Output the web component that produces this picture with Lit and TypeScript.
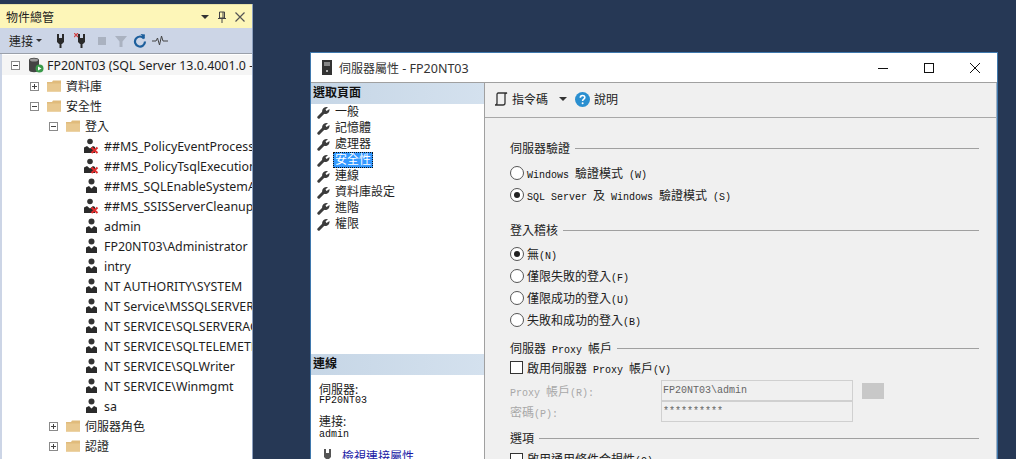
import { LitElement, html, css, svg } from "lit";
import { customElement } from "lit/decorators.js";

const folder = html`<svg class="ic" width="14" height="12" viewBox="0 0 14 12"><path d="M0 2h5l1-1.500h8V11.500H0z" fill="#e0bb7c"/><path d="M0 3.500h14v8H0z" fill="#e8c88f"/></svg>`;
const user = (bad: boolean) => html`<svg class="ic" width="16" height="16" viewBox="0 0 16 16">
  ${bad
    ? svg`<circle cx="6" cy="3.500" r="2.800" fill="#333"/>
      <path d="M0 15V9.500L3 8l3 2.500L9 8l2 1v6z" fill="#2b2b2b"/>
      <path d="M7.500 9.500l6 5.500M13.500 9.500l-6 5.500" stroke="#e02c2c" stroke-width="2" fill="none"/>`
    : svg`<circle cx="7.500" cy="3.500" r="3" fill="#333"/>
      <path d="M2 15V9.500L5 8l2.500 2.500L10 8l3 1.500V15z" fill="#2b2b2b"/>`}
</svg>`;
const expander = (open: boolean) => html`<svg class="ic" width="9" height="9" viewBox="0 0 9 9">
  <rect x=".5" y=".5" width="8" height="8" fill="#fff" stroke="#8a8a8a"/>
  <path d="M2 4.500h5${open ? "" : "M4.500 2v5"}" stroke="#444" fill="none"/></svg>`;
const plug = (x = false, c = "#2a2a2a") => html`<svg class="ic" width="16" height="16" viewBox="0 0 16 16">
  <path d="M5 1v4M10 1v4" stroke="${c}" stroke-width="2"/>
  <path d="M4 5h7v4l-2 2H6L4 9z" fill="${c}"/><path d="M7.500 11v4" stroke="${c}" stroke-width="2"/>
  ${x ? svg`<path d="M0 0l4 4M4 0L0 4" stroke="#d04040" stroke-width="1.200"/>` : ""}
</svg>`;
const wrench = html`<svg class="ic" width="13" height="13" viewBox="0 0 13 13">
  <path d="M1.800 11.200L6.500 6.500" stroke="#3c3c3c" stroke-width="3" stroke-linecap="round"/>
  <path d="M5 5.500C5 2.500 7.500.5 11 1L8.500 3.500 9.500 5l3-2C13 6.500 10 8.500 7.500 8z" fill="#3c3c3c"/></svg>`;

interface Row { t: string; lvl: number; kind: "folder" | "user"; open?: boolean; bad?: boolean }
const logins: [string, boolean][] = [
  ["##MS_PolicyEventProcessingLogin##", true], ["##MS_PolicyTsqlExecutionLogin##", true],
  ["##MS_SQLEnableSystemAssemblyLoadingUser##", false], ["##MS_SSISServerCleanupJobLogin##", true],
  ["admin", false], ["FP20NT03\\Administrator", false], ["intry", false], ["NT AUTHORITY\\SYSTEM", false],
  ["NT Service\\MSSQLSERVER", false], ["NT SERVICE\\SQLSERVERAGENT", false], ["NT SERVICE\\SQLTELEMETRY", false],
  ["NT SERVICE\\SQLWriter", false], ["NT SERVICE\\Winmgmt", false], ["sa", false],
];
const rows: Row[] = [
  { t: "資料庫", lvl: 1, kind: "folder", open: false },
  { t: "安全性", lvl: 1, kind: "folder", open: true },
  { t: "登入", lvl: 2, kind: "folder", open: true },
  ...logins.map(([t, bad]) => ({ t, bad, lvl: 3, kind: "user" as const })),
  { t: "伺服器角色", lvl: 2, kind: "folder", open: false },
  { t: "認證", lvl: 2, kind: "folder", open: false },
];
const pages = ["一般", "記憶體", "處理器", "安全性", "連線", "資料庫設定", "進階", "權限"];

@customElement("app-root")
export class AppRoot extends LitElement {
  static styles = css`
    :host { display: flex; align-items: flex-start; width: 1016px; height: 459px; overflow: hidden; background: #263855;
      font-family: "Noto Sans", "Noto Sans CJK TC", sans-serif; color: #1e1e1e; }
    .ic { flex: none; display: block; }
    .explorer { width: 253px; height: 455px; margin-top: 4px; flex: none; background: #ccd5e6; display: flex; flex-direction: column; border-right: 1px solid #8ea1c0; box-sizing: border-box; }
    .etitle { height: 24px; flex: none; background: #fdf6b8; display: flex; align-items: center; padding: 0 6px; font-size: 12px; border-top: 1px solid #e8e2a8; box-sizing: border-box; }
    .etitle span { flex: 1; }
    .ectl { display: flex; align-items: center; gap: 8px; color: #444; margin-right: 1px; }
    .etool { height: 26px; flex: none; display: flex; align-items: center; padding-left: 9px; font-size: 12px; border-bottom: 1px solid #9aa0aa; box-sizing: border-box; gap: 5px; color: #222; }
    .etool .connect { display: flex; align-items: center; gap: 3px; margin-right: 6px; }
    .caret { width: 0; height: 0; border: 3px solid transparent; border-top: 3px solid #333; border-bottom: 0; }
    .bigcaret { border-width: 4px 4px 0; }
    .tree { flex: 1; background: #fff; margin-left: 2px; min-height: 0; overflow: hidden; padding-top: 1px; }
    .row { height: 20px; display: flex; align-items: center; font-size: 12.400px; white-space: nowrap; overflow: hidden; }
    .row .exp { width: 9px; flex: none; margin-right: 8px; }
    .root { padding-left: 9px; background: #f5f5f5; margin-bottom: 1px; }
    .root .tx { margin-left: 3px; }
    .folder .tx { margin-left: 5px; font-size: 12px; }
    .user .tx { margin-left: 4px; }
    .l1 { padding-left: 28px; } .l2 { padding-left: 47px; } .l3 { padding-left: 82px; }

    .dialog { width: 688px; height: 407px; margin: 52px 0 0 57px; flex: none; background: #f0f0f0; border: 1px solid #3f78ad; border-bottom: 0; box-sizing: border-box; display: flex; flex-direction: column; }
    .dtitle { height: 29px; flex: none; background: #fff; border-bottom: 1px solid #a0a0a0; display: flex; align-items: center; padding-left: 11px; font-size: 12px; color: #333; }
    .dtitle .name { margin-left: 7px; flex: 1; }
    .lat { font-size: 12.500px; }
    .winbtns { display: flex; align-items: center; gap: 36px; padding-right: 17px; }
    .dbody { flex: 1; min-height: 0; display: flex; }
    .left { width: 173px; flex: none; background: #fff; border-right: 1px solid #a0a0a0; display: flex; flex-direction: column; }
    .lhead { height: 21px; flex: none; box-sizing: border-box; padding: 0 0 3px 2px; font-size: 12px; font-weight: 700; display: flex; align-items: center; background: linear-gradient(90deg, #c6d6e6, #d4e1ee); color: #111; }
    .pagelist { height: 250px; flex: none; box-sizing: border-box; padding-left: 6px; }
    .page { height: 16px; display: flex; align-items: center; font-size: 12px; gap: 3px; }
    .page .tx { padding: 0 1px; line-height: 14px; border: 1px dotted transparent; }
    .page.sel .tx { background: #3399ff; color: #fff; border-color: #111; }
    .conn { padding: 8px 0 0 8px; flex: 1; min-height: 0; overflow: hidden; }
    .conn .k { font-size: 12px; line-height: 13px; color: #222; }
    .conn .v { font-family: "Liberation Mono", monospace; font-size: 10px; line-height: 10px; margin-bottom: 9px; color: #111; }
    .conn .v2 { padding-top: 2px; margin-bottom: 7px; }
    .link { display: flex; align-items: center; gap: 6px; color: #1a1aa6; font-size: 12px; padding-left: 1px; margin-top: 4px; }
    .right { flex: 1; min-width: 0; display: flex; flex-direction: column; border-right: 1px solid #9fb0c4; }
    .rtool { height: 35px; flex: none; border-bottom: 1px solid #a8a8a8; display: flex; align-items: center; padding: 0 0 2px 9px; font-size: 12px; color: #222; box-sizing: border-box; }
    .rtool .scr { margin-left: 4px; margin-right: 11px; }
    .rtool .help { margin: 0 4px 0 8px; }
    .form { flex: 1; min-height: 0; overflow: hidden; padding: 22px 17px 0 25px; font-size: 12px; }
    .sec { display: flex; align-items: center; height: 16px; gap: 5px; font-size: 12px; color: #222; white-space: pre; }
    .sec::after { content: ""; flex: 1; height: 1px; background: #a0a0a0; }
    .mono { font-family: "Liberation Mono", "Noto Sans CJK TC", monospace; font-size: 10px; white-space: pre; color: #111; }
    .field .mono { color: inherit; }
    .opt { display: flex; align-items: center; height: 22px; gap: 3px; font-size: 12px; color: #222; white-space: pre; }
    .radio { width: 12px; height: 12px; border-radius: 50%; background: #fff; border: 1px solid #555; flex: none; display: flex; align-items: center; justify-content: center; }
    .radio i { width: 6px; height: 6px; border-radius: 50%; background: #222; }
    .check { width: 11px; height: 11px; background: #fff; border: 1px solid #333; flex: none; margin-right: 1px; }
    .g1 { margin-top: 6px; }
    .sec2 { margin-top: 16px; }
    .g2 { margin-top: 5px; }
    .sec3 { margin-top: 9px; }
    .opt-en { height: 21px; margin-top: 1px; }
    .opt-last { margin-top: 2px; }
    .sec-last { margin-top: 8px; }
    .fields { margin-top: 2px; }
    .field { display: flex; align-items: center; height: 21px; color: #a8a8a8; font-size: 12px; white-space: pre; }
    .field .lab { width: 151px; flex: none; }
    .input { width: 192px; height: 21px; box-sizing: border-box; background: #f0f0f0; border: 1px solid #d0d0d0; font-family: "Liberation Mono", monospace; font-size: 10px; color: #666; display: flex; align-items: center; padding-left: 1px; }
    .dots { width: 22px; height: 16px; background: #c8c8c8; margin-left: 9px; }
  `;

  render() {
    return html`
      <section class="explorer">
        <div class="etitle"><span>物件總管</span>
          <div class="ectl">
            <div class="caret bigcaret"></div>
            <svg class="ic" width="10" height="12" viewBox="0 0 10 12"><path d="M2.500 1h5v6h-5zM1 7.500h8M5 8v4M6 1v6" stroke="#444" fill="none"/></svg>
            <svg class="ic" width="10" height="10" viewBox="0 0 10 10"><path d="M.5.5l9 9M9.500.5l-9 9" stroke="#555" stroke-width="1.200"/></svg>
          </div>
        </div>
        <div class="etool">
          <div class="connect">連接<div class="caret"></div></div>
          ${plug()}${plug(true)}
          <svg class="ic" width="14" height="14" viewBox="0 0 14 14"><rect x="3" y="3" width="8" height="8" fill="#aab2c0"/></svg>
          <svg class="ic" width="14" height="14" viewBox="0 0 14 14"><path d="M1 2h12L8.500 7.500V13h-3V7.500z" fill="#aab2c0"/></svg>
          <svg class="ic" width="14" height="14" viewBox="0 0 14 14"><path d="M11 4.500A5 5 0 1 0 12 7.500" stroke="#1d5f9c" stroke-width="2.200" fill="none"/><path d="M7.500 0l4.500 .5L11.500 5z" fill="#1d5f9c"/></svg>
          <svg class="ic" width="16" height="14" viewBox="0 0 16 14"><path d="M0 7h4l1.500-3 2 7 2-9 1.500 5h5" stroke="#444" fill="none"/></svg>
        </div>
        <div class="tree">
          <div class="row root">
            <span class="exp">${expander(true)}</span>
            <svg class="ic" width="16" height="16" viewBox="0 0 16 16">
              <path d="M1 3c0-3 10-3 10 0v10c0 3-10 3-10 0z" fill="#444"/><ellipse cx="6" cy="3" rx="4" ry="1.500" fill="#999"/>
              <circle cx="11.500" cy="11.500" r="4" fill="#3a9a4a"/><path d="M10 9.500l3.500 2-3.500 2z" fill="#fff"/></svg>
            <span class="tx">FP20NT03 (SQL Server 13.0.4001.0 - FP20NT03\\admin)</span>
          </div>
          ${rows.map((r) => html`
            <div class="row ${r.kind} l${r.lvl}">
              ${r.kind === "folder" ? html`<span class="exp">${expander(!!r.open)}</span>${folder}` : user(!!r.bad)}
              <span class="tx">${r.t}</span>
            </div>`)}
        </div>
      </section>

      <section class="dialog">
        <div class="dtitle">
          <svg class="ic" width="10" height="15" viewBox="0 0 10 15"><path d="M0 0h10v15H0z" fill="#333"/><path d="M2 3h6M2 5h6" stroke="#ddd"/><circle cx="5" cy="11" r="1" fill="#ddd"/></svg>
          <span class="name">伺服器屬性<span class="lat"> - FP20NT03</span></span>
          <div class="winbtns">
            <svg class="ic" width="10" height="10" viewBox="0 0 10 10"><path d="M0 5.500h10" stroke="#111"/></svg>
            <svg class="ic" width="10" height="10" viewBox="0 0 10 10"><rect x=".5" y=".5" width="9" height="9" fill="none" stroke="#111"/></svg>
            <svg class="ic" width="10" height="10" viewBox="0 0 10 10"><path d="M0 0l10 10M10 0L0 10" stroke="#111"/></svg>
          </div>
        </div>
        <div class="dbody">
          <div class="left">
            <div class="lhead">選取頁面</div>
            <div class="pagelist">
              ${pages.map((p, i) => html`<div class="page ${i === 3 ? "sel" : ""}">${wrench}<span class="tx">${p}</span></div>`)}
            </div>
            <div class="lhead">連線</div>
            <div class="conn">
              <div class="k">伺服器:</div><div class="v">FP20NT03</div>
              <div class="k">連接:</div><div class="v v2">admin</div>
              <div class="link">${plug(false, "#555")}<span>檢視連接屬性</span></div>
            </div>
          </div>
          <div class="right">
            <div class="rtool">
              <svg class="ic" width="14" height="14" viewBox="0 0 14 14"><path d="M4 1h9l-2 1v9c0 1-1 2-2 2H1c1 0 2-1 2-2V2z" fill="none" stroke="#333" stroke-width="1.300"/></svg>
              <span class="scr">指令碼</span>
              <div class="caret bigcaret"></div>
              <svg class="ic help" width="15" height="15" viewBox="0 0 15 15"><circle cx="7.500" cy="7.500" r="7.500" fill="#2a8fd0"/><path d="M5.300 5.800c0-3 4.500-3 4.500-.3 0 1.700-2.200 1.700-2.200 3.500" stroke="#fff" stroke-width="1.600" fill="none"/><circle cx="7.600" cy="11.300" r="1" fill="#fff"/></svg>
              <span>說明</span>
            </div>
            <div class="form">
              <div class="sec"><span>伺服器驗證</span></div>
              <div class="g1">
                <div class="opt"><span class="radio"></span><span><span class="mono">Windows </span>驗證模式<span class="mono"> (W)</span></span></div>
                <div class="opt"><span class="radio"><i></i></span><span><span class="mono">SQL Server </span>及<span class="mono"> Windows </span>驗證模式<span class="mono"> (S)</span></span></div>
              </div>
              <div class="sec sec2"><span>登入稽核</span></div>
              <div class="g2">
                <div class="opt"><span class="radio"><i></i></span><span>無<span class="mono">(N)</span></span></div>
                <div class="opt"><span class="radio"></span><span>僅限失敗的登入<span class="mono">(F)</span></span></div>
                <div class="opt"><span class="radio"></span><span>僅限成功的登入<span class="mono">(U)</span></span></div>
                <div class="opt"><span class="radio"></span><span>失敗和成功的登入<span class="mono">(B)</span></span></div>
              </div>
              <div class="sec sec3"><span>伺服器<span class="mono"> Proxy </span>帳戶</span></div>
              <div class="opt opt-en"><span class="check"></span><span>啟用伺服器<span class="mono"> Proxy </span>帳戶<span class="mono">(V)</span></span></div>
              <div class="fields">
                <div class="field"><span class="lab"><span class="mono">Proxy </span>帳戶<span class="mono">(R):</span></span><div class="input">FP20NT03\\admin</div><div class="dots"></div></div>
                <div class="field"><span class="lab">密碼<span class="mono">(P):</span></span><div class="input">**********</div></div>
              </div>
              <div class="sec sec-last"><span>選項</span></div>
              <div class="opt opt-last"><span class="check"></span><span>啟用通用條件合規性<span class="mono">(O)</span></span></div>
            </div>
          </div>
        </div>
      </section>
    `;
  }
}
